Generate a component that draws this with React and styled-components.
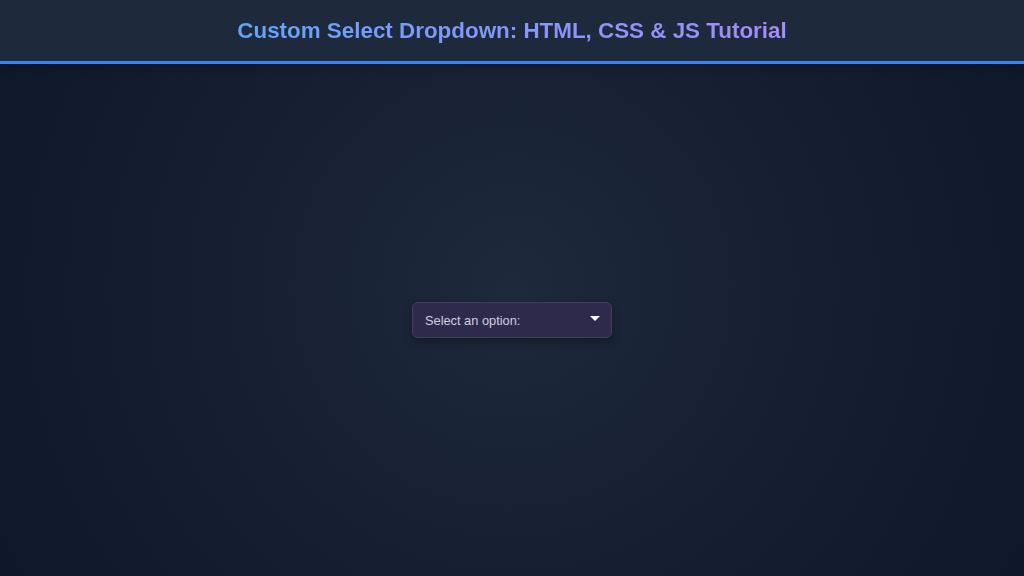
import React, { useState } from "react";
import styled, { createGlobalStyle } from "styled-components";

const GlobalStyle = createGlobalStyle`
  html, body { margin: 0; padding: 0; height: 100%; }
  body {
    font-family: "Liberation Sans", Arial, sans-serif;
    background: #0f172a;
  }
  #root { height: 100%; }
`;

const Page = styled.div`
  display: flex;
  flex-direction: column;
  min-height: 100vh;
  background: radial-gradient(circle at 50% 50%, #1e293b 0%, #172033 45%, #0f172a 100%);
`;

const Header = styled.header`
  display: flex;
  align-items: center;
  justify-content: center;
  height: 61px;
  background: #1e293b;
  border-bottom: 3px solid #3b82f6;
  box-shadow: 0 2px 10px rgba(0, 0, 0, 0.35);
`;

const Title = styled.h1`
  margin: 0;
  font-size: 22.4px;
  font-weight: 700;
  background: linear-gradient(90deg, #60a5fa, #a78bfa);
  -webkit-background-clip: text;
  background-clip: text;
  color: transparent;
`;

const Main = styled.main`
  flex: 1;
  display: flex;
  align-items: center;
  justify-content: center;
`;

const Select = styled.div`
  position: relative;
  width: 200px;
`;

const Trigger = styled.button`
  box-sizing: border-box;
  display: flex;
  align-items: center;
  justify-content: space-between;
  width: 100%;
  height: 36px;
  padding: 0 11px 0 12px;
  background: #2e2a4b;
  border: 1px solid #403d60;
  border-radius: 6px;
  box-shadow: 0 4px 10px rgba(0, 0, 0, 0.3);
  color: #d0d0e0;
  font-family: inherit;
  font-size: 12.8px;
  cursor: pointer;
`;

const Caret = styled.span`
  width: 0;
  height: 0;
  border-left: 5px solid transparent;
  border-right: 5px solid transparent;
  border-top: 5px solid #ffffff;
  margin-top: -4px;
  transform: ${(p) => (p.$open ? "rotate(180deg)" : "none")};
`;

const Menu = styled.ul`
  position: absolute;
  top: 40px;
  left: 0;
  right: 0;
  margin: 0;
  padding: 4px 0;
  list-style: none;
  background: #2e2a4b;
  border: 1px solid #403d60;
  border-radius: 6px;
  box-shadow: 0 6px 14px rgba(0, 0, 0, 0.35);
`;

const Option = styled.li`
  padding: 8px 12px;
  font-size: 12.8px;
  color: #d0d0e0;
  cursor: pointer;
  &:hover { background: #3b3766; }
`;

const options = ["HTML", "CSS", "JavaScript"];

export default function App() {
  const [open, setOpen] = useState(false);
  const [value, setValue] = useState(null);

  return (
    <>
      <GlobalStyle />
      <Page>
        <Header>
          <Title>Custom Select Dropdown: HTML, CSS &amp; JS Tutorial</Title>
        </Header>
        <Main>
          <Select>
            <Trigger onClick={() => setOpen((o) => !o)}>
              <span>{value || "Select an option:"}</span>
              <Caret $open={open} />
            </Trigger>
            {open && (
              <Menu>
                {options.map((o) => (
                  <Option
                    key={o}
                    onClick={() => {
                      setValue(o);
                      setOpen(false);
                    }}
                  >
                    {o}
                  </Option>
                ))}
              </Menu>
            )}
          </Select>
        </Main>
      </Page>
    </>
  );
}
